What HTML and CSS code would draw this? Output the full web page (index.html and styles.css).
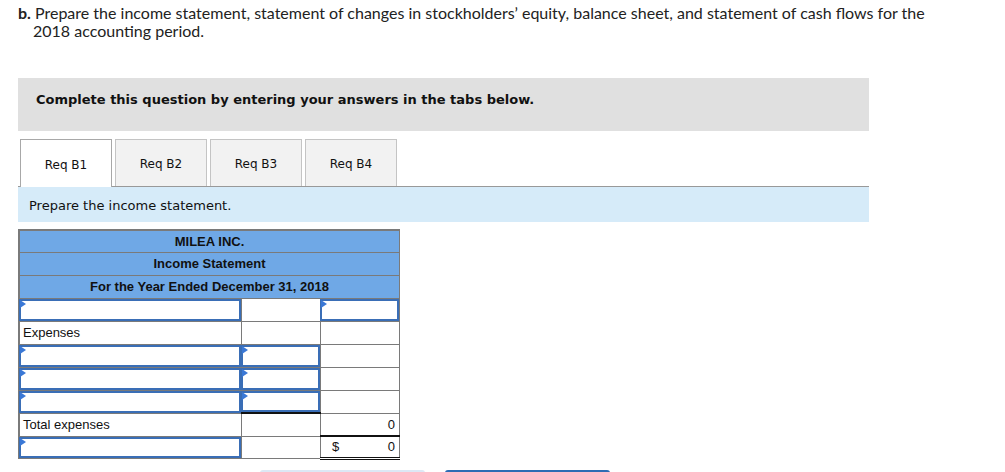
FILE: index.html
```html
<!DOCTYPE html>
<html>
<head>
<meta charset="utf-8">
<link rel="stylesheet" href="styles.css">
</head>
<body>
<div class="page">
  <p class="question"><b>b.</b> Prepare the income statement, statement of changes in stockholders’ equity, balance sheet, and statement of cash flows for the 2018 accounting period.</p>

  <div class="notice">Complete this question by entering your answers in the tabs below.</div>

  <div class="tabs">
    <div class="tab active">Req B1</div>
    <div class="tab">Req B2</div>
    <div class="tab">Req B3</div>
    <div class="tab">Req B4</div>
  </div>

  <div class="instruction">Prepare the income statement.</div>

  <table class="stmt">
    <colgroup><col class="c1"><col class="c2"><col class="c3"></colgroup>
    <tr class="hd"><td colspan="3">MILEA INC.</td></tr>
    <tr class="hd"><td colspan="3">Income Statement</td></tr>
    <tr class="hd"><td colspan="3">For the Year Ended December 31, 2018</td></tr>
    <tr><td class="in"><div class="box"></div></td><td></td><td class="in"><div class="box"></div></td></tr>
    <tr><td class="lbl">Expenses</td><td></td><td></td></tr>
    <tr><td class="in"><div class="box"></div></td><td class="in"><div class="box"></div></td><td></td></tr>
    <tr><td class="in"><div class="box"></div></td><td class="in"><div class="box"></div></td><td></td></tr>
    <tr><td class="in"><div class="box"></div></td><td class="in under"><div class="box"></div></td><td></td></tr>
    <tr><td class="lbl">Total expenses</td><td></td><td class="num under">0</td></tr>
    <tr class="last"><td class="in"><div class="box"></div></td><td></td><td class="num dbl"><span class="cur">$</span>0</td></tr>
  </table>

  <div class="buttons">
    <div class="btn prev"></div>
    <div class="btn next"></div>
  </div>
</div>
</body>
</html>
```

FILE: styles.css
```css
html, body {
  margin: 0;
  padding: 0;
  background: #fff;
}

.page {
  padding: 4px 0 0 18px;
  width: 851px;
}

.question {
  margin: 0;
  font-family: "Lato", "Open Sans", sans-serif;
  font-size: 16px;
  line-height: 18px;
  color: #222;
  padding-left: 15px;
  text-indent: -15px;
  width: 920px;
}

.notice {
  margin-top: 38px;
  height: 53px;
  background: #e0e0e0;
  box-sizing: border-box;
  padding: 14px 0 0 18px;
  font-family: "DejaVu Sans", Verdana, sans-serif;
  font-weight: bold;
  font-size: 13px;
  color: #111;
}

.tabs {
  margin-top: 8px;
  display: flex;
  gap: 3px;
  padding-left: 2px;
  border-bottom: 1px solid #999;
  height: 47px;
}

.tab {
  width: 92px;
  height: 47px;
  box-sizing: border-box;
  border: 1px solid #c4c4c4;
  border-bottom: none;
  background: #f2f2f2;
  font-family: "DejaVu Sans", Verdana, sans-serif;
  font-size: 12px;
  color: #111;
  display: flex;
  align-items: center;
  justify-content: center;
  padding-top: 2px;
}

.tab.active {
  background: #fff;
  border-color: #a8a8a8;
  height: 48px;
}

.instruction {
  height: 35px;
  background: #d6ebf9;
  box-sizing: border-box;
  padding: 11px 0 0 11px;
  font-family: "DejaVu Sans", Verdana, sans-serif;
  font-size: 13px;
  color: #111;
}

.stmt {
  margin-top: 7px;
  border-collapse: collapse;
  width: 382px;
  table-layout: fixed;
  font-family: "Liberation Sans", Arial, sans-serif;
  font-size: 13px;
  color: #111;
}

.stmt col.c1 { width: 222px; }
.stmt col.c2 { width: 79px; }
.stmt col.c3 { width: 79px; }

.stmt td {
  height: 23px;
  border: 1px solid #7a7a7a;
  padding: 0;
  box-sizing: border-box;
}

.stmt tr:first-child td { border-top-width: 2px; height: 22px; }
.stmt tr.last td { height: 22px; }
.stmt td:first-child { border-left-width: 2px; }

.stmt tr.hd td {
  background: #6fa8e6;
  text-align: center;
  font-weight: bold;
}

.stmt td.lbl {
  padding-left: 3px;
}

.stmt td.in {
  position: relative;
  padding: 0;
}

.stmt .box {
  position: absolute;
  inset: 0;
  border: 2px solid #3a6eb6;
  box-sizing: border-box;
  margin-left: -1px;
}

.stmt .box::before {
  content: "";
  position: absolute;
  left: -1px;
  top: -1px;
  border-style: solid;
  border-width: 4px 0 4px 6px;
  border-color: transparent transparent transparent #3a78d6;
}

.stmt td.under {
  border-bottom: 2px solid #111;
}

.stmt td.num {
  text-align: right;
  padding-right: 4px;
}

.stmt td.dbl {
  border-bottom: 3px double #111;
  padding-left: 11px;
}

.stmt .cur {
  float: left;
}

.buttons {
  margin-top: 10px;
  display: flex;
  gap: 20px;
  padding-left: 242px;
}

.btn {
  width: 165px;
  height: 10px;
  border-radius: 3px 3px 0 0;
}

.btn.prev { background: #dce8f5; }
.btn.next { background: #2e6cb4; }
```
